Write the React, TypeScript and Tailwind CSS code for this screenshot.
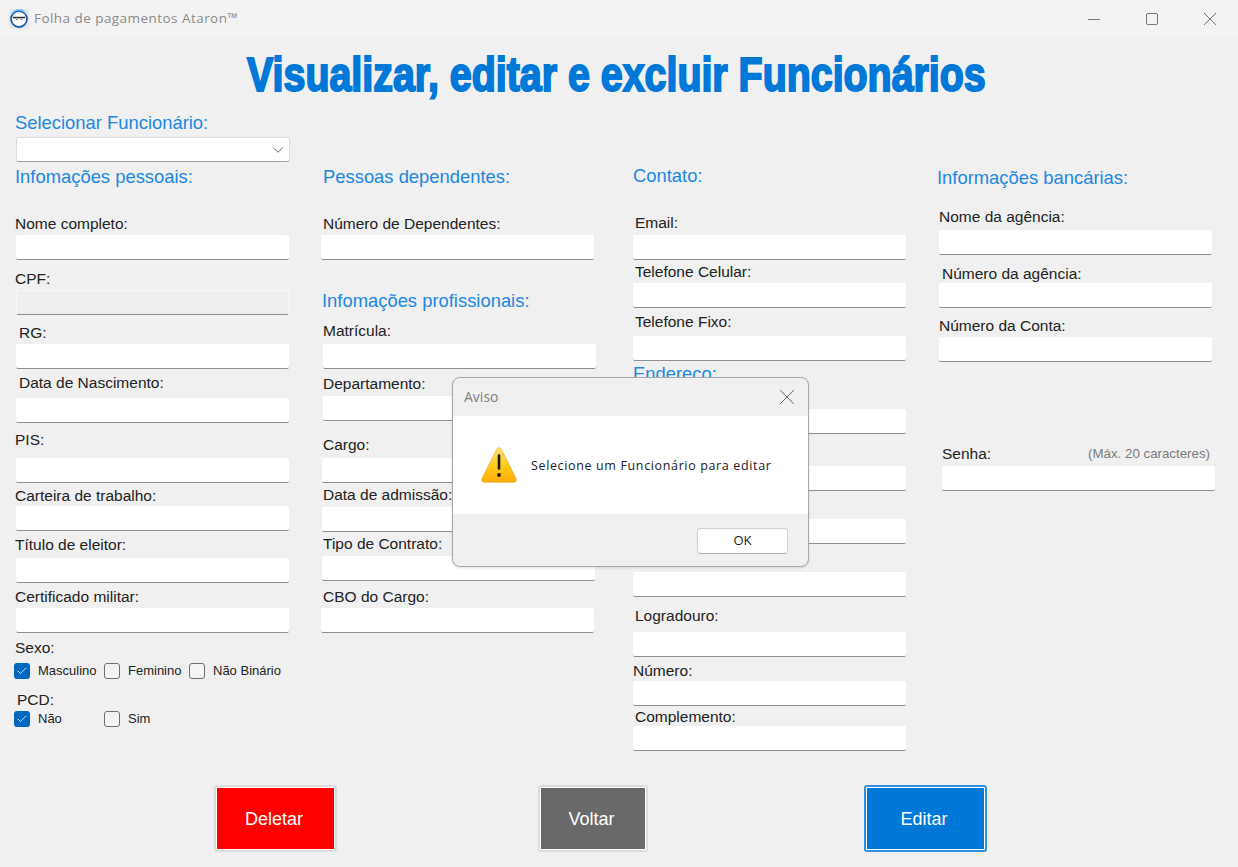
import { Check, ChevronDown, X } from 'lucide-react'

type Item = {
  kind?: 'section'
  label?: string
  top: string
  gap?: string
  labelX?: string
  inputX?: string
  note?: string
  disabled?: boolean
}

const col1: Item[] = [
  { label: 'Nome completo:', top: 'mt-[29px]', gap: 'mt-[3px]', inputX: 'ml-px' },
  { label: 'CPF:', top: 'mt-[11px]', gap: 'mt-[3px]', inputX: 'ml-px', disabled: true },
  { label: 'RG:', top: 'mt-[10px]', gap: 'mt-[3px]', labelX: 'ml-1', inputX: 'ml-px' },
  { label: 'Data de Nascimento:', top: 'mt-[6px]', gap: 'mt-[7px]', labelX: 'ml-1', inputX: 'ml-px' },
  { label: 'PIS:', top: 'mt-[9px]', gap: 'mt-[10px]', inputX: 'ml-px' },
  { label: 'Carteira de trabalho:', top: 'mt-[5px]', gap: 'mt-[2px]', inputX: 'ml-px' },
  { label: 'Título de eleitor:', top: 'mt-[6px]', gap: 'mt-[5px]', inputX: 'ml-px' },
  { label: 'Certificado militar:', top: 'mt-[6px]', gap: 'mt-[3px]', inputX: 'ml-px' },
]

const col2: Item[] = [
  { kind: 'section', label: 'Pessoas dependentes:', top: 'mt-[54px]', labelX: 'ml-[2px]' },
  { label: 'Número de Dependentes:', top: 'mt-[29px]', gap: 'mt-[3px]', labelX: 'ml-[2px]' },
  { kind: 'section', label: 'Infomações profissionais:', top: 'mt-[31px]', labelX: 'ml-px' },
  { label: 'Matrícula:', top: 'mt-[12px]', gap: 'mt-[5px]', labelX: 'ml-[2px]', inputX: 'ml-[2px]' },
  { label: 'Departamento:', top: 'mt-[7px]', gap: 'mt-[4px]', labelX: 'ml-[2px]', inputX: 'ml-[2px]' },
  { label: 'Cargo:', top: 'mt-[16px]', gap: 'mt-[5px]', labelX: 'ml-[2px]', inputX: 'ml-px' },
  { label: 'Data de admissão:', top: 'mt-[4px]', gap: 'mt-[4px]', labelX: 'ml-[2px]', inputX: 'ml-px' },
  { label: 'Tipo de Contrato:', top: 'mt-[4px]', gap: 'mt-[4px]', labelX: 'ml-[2px]', inputX: 'ml-px' },
  { label: 'CBO do Cargo:', top: 'mt-[8px]', gap: 'mt-[3px]', labelX: 'ml-[2px]' },
]

const col3: Item[] = [
  { kind: 'section', label: 'Contato:', top: 'mt-[53px]' },
  { label: 'Email:', top: 'mt-[29px]', gap: 'mt-[4px]', labelX: 'ml-[2px]' },
  { label: 'Telefone Celular:', top: 'mt-[4px]', gap: 'mt-[3px]', labelX: 'ml-[2px]' },
  { label: 'Telefone Fixo:', top: 'mt-[6px]', gap: 'mt-[6px]', labelX: 'ml-[2px]' },
  { kind: 'section', label: 'Endereço:', top: 'mt-[3px]' },
  // os rótulos destes quatro ficam atrás do aviso
  { top: '', gap: 'mt-[25px]' },
  { top: '', gap: 'mt-[32px]' },
  { top: '', gap: 'mt-[28px]' },
  { top: '', gap: 'mt-[28px]' },
  { label: 'Logradouro:', top: 'mt-[11px]', gap: 'mt-[8px]', labelX: 'ml-[2px]' },
  { label: 'Número:', top: 'mt-[6px]', gap: 'mt-[2px]' },
  { label: 'Complemento:', top: 'mt-[3px]', gap: 'mt-px', labelX: 'ml-[2px]' },
]

const col4: Item[] = [
  { kind: 'section', label: 'Informações bancárias:', top: 'mt-[55px]' },
  { label: 'Nome da agência:', top: 'mt-[21px]', gap: 'mt-[5px]', labelX: 'ml-[2px]', inputX: 'ml-[2px]' },
  { label: 'Número da agência:', top: 'mt-[11px]', gap: 'mt-px', labelX: 'ml-[5px]', inputX: 'ml-[2px]' },
  { label: 'Número da Conta:', top: 'mt-[10px]', gap: 'mt-[3px]', labelX: 'ml-[2px]', inputX: 'ml-[2px]' },
  { label: 'Senha:', top: 'mt-[84px]', gap: 'mt-[4px]', labelX: 'ml-[5px]', inputX: 'ml-[5px]', note: '(Máx. 20 caracteres)' },
]

function Section({ label, className = '' }: { label: string; className?: string }) {
  return <div className={`h-5 text-[18.4px] leading-5 whitespace-nowrap text-[#2188e0] ${className}`}>{label}</div>
}

function Label({ children, className = '' }: { children: string; className?: string }) {
  return <div className={`h-4 text-[15.5px] leading-4 whitespace-nowrap text-[#222] ${className}`}>{children}</div>
}

function Input({ disabled, className = '' }: { disabled?: boolean; className?: string }) {
  return (
    <input
      disabled={disabled}
      className={`block h-[25px] w-[273px] rounded-[2px] border-b border-b-[#8f8f8f] ${disabled ? 'border-x border-t border-x-[#f7f7f7] border-t-[#f7f7f7] bg-[#efefef]' : 'bg-white'} ${className}`}
    />
  )
}

function Column({ items, className }: { items: Item[]; className: string }) {
  return (
    <div className={`flex flex-col ${className}`}>
      {items.map((item, i) =>
        item.kind === 'section' ? (
          <Section key={i} label={item.label!} className={`${item.top} ${item.labelX ?? ''}`} />
        ) : (
          <div key={i}>
            {item.label && (
              <div className={`flex items-center justify-between ${item.top}`}>
                <Label className={item.labelX}>{item.label}</Label>
                {item.note && <span className="mr-[7px] text-[13.3px] leading-4 text-[#7a7a7a]">{item.note}</span>}
              </div>
            )}
            <Input disabled={item.disabled} className={`${item.gap ?? ''} ${item.inputX ?? ''}`} />
          </div>
        ),
      )}
    </div>
  )
}

function CheckItem({ label, checked, className }: { label: string; checked?: boolean; className: string }) {
  return (
    <div className={`flex h-4 items-center gap-2 ${className}`}>
      {checked ? (
        <span className="flex size-4 items-center justify-center rounded-[3px] bg-[#0067c0]">
          <Check size={12} strokeWidth={1.5} className="text-white" />
        </span>
      ) : (
        <span className="size-4 rounded-[3px] border border-[#6e6e6e] bg-[#f4f4f4]" />
      )}
      <span className="text-[13px] leading-[18px] whitespace-nowrap text-[#222]">{label}</span>
    </div>
  )
}

function AppIcon() {
  return (
    <svg width="20" height="20" viewBox="0 0 20 20" className="shrink-0">
      <rect width="20" height="20" fill="#e8e8e8" />
      <circle cx="10" cy="10" r="8" fill="#fff" stroke="#1f5fa8" strokeWidth="1.8" />
      <path d="M3 4.500A8 8 0 0 1 17 5" fill="none" stroke="#7cc4ee" strokeWidth="1.6" />
      <path d="M4 8.500h12" stroke="#222" strokeWidth="1.4" />
      <path d="M6.500 9.500l1.500 1.500 1-1.500M11 9.500l1.500 1.500 1-1.500" fill="none" stroke="#555" strokeWidth="0.8" />
    </svg>
  )
}

function WarningIcon() {
  return (
    <svg width="36" height="36" viewBox="0 0 36 36" className="shrink-0">
      <defs>
        <linearGradient id="warn" x1="0" y1="0" x2="0" y2="1">
          <stop offset="0" stopColor="#ffe27a" />
          <stop offset="0.5" stopColor="#ffcb1f" />
          <stop offset="1" stopColor="#fbae00" />
        </linearGradient>
      </defs>
      <path
        d="M18 .8c1 0 1.800.5 2.400 1.600l14.600 29c.9 1.900-.1 3.800-2 3.800H3c-1.900 0-2.900-1.900-2-3.800l14.600-29C16.200 1.300 17 .8 18 .8z"
        fill="url(#warn)"
        stroke="#e5a50a"
        strokeWidth="0.6"
      />
      <path d="M18 8.500v13" stroke="#1a1a1a" strokeWidth="2.600" strokeLinecap="round" />
      <circle cx="18" cy="28" r="1.900" fill="#1a1a1a" />
    </svg>
  )
}

function FormButton({ label, fill, frame, className }: { label: string; fill: string; frame: string; className: string }) {
  return (
    <button className={`h-[67px] rounded-[3px] border-2 bg-white p-px ${frame} ${className}`}>
      <span className={`flex size-full items-center justify-center pt-px pr-[3px] text-[18px] text-white ${fill}`}>{label}</span>
    </button>
  )
}

function WindowControls() {
  return (
    <div className="ml-auto flex items-center gap-[46px] pr-[22px]">
      <svg width="12" height="12" viewBox="0 0 12 12">
        <path d="M0 6.500h12" stroke="#777" strokeWidth="1" />
      </svg>
      <svg width="12" height="12" viewBox="0 0 12 12">
        <rect x="0.5" y="0.5" width="11" height="11" rx="1.500" fill="none" stroke="#777" strokeWidth="1" />
      </svg>
      <svg width="12" height="12" viewBox="0 0 12 12">
        <path d="M0 0l12 12M12 0L0 12" stroke="#777" strokeWidth="1" />
      </svg>
    </div>
  )
}

export default function App() {
  return (
    <div className="relative flex h-[867px] w-[1238px] flex-col overflow-hidden bg-[#f0f0f0] font-['Liberation_Sans',sans-serif]">
      <div className="flex h-[37px] shrink-0 items-center bg-[#f3f3f3] pl-[9px]">
        <AppIcon />
        <span className="ml-[5px] font-['Open_Sans',sans-serif] text-[13.5px] tracking-[0.45px] text-[#8a8a8a]">Folha de pagamentos Ataron™</span>
        <WindowControls />
      </div>

      <div className="flex h-[76px] shrink-0 items-center justify-center pr-[5px]">
        <h1 className="origin-center scale-x-[0.82] text-[48px] leading-none font-bold whitespace-nowrap text-[#0078d7] [-webkit-text-stroke:2px_#0078d7]">
          Visualizar, editar e excluir Funcionários
        </h1>
      </div>

      <div className="flex">
        <div className="ml-[15px] flex w-[276px] flex-col">
          <Section label="Selecionar Funcionário:" />
          <div className="mt-1 ml-px flex h-[25px] w-[274px] items-center justify-end rounded-[3px] border border-[#dcdcdc] border-b-[#a0a0a0] bg-white pr-[2px]">
            <ChevronDown size={18} strokeWidth={1.2} className="text-[#555]" />
          </div>
          <Section label="Infomações pessoais:" className="mt-[5px]" />
          <Column items={col1} className="" />
          <Label className="mt-[7px]">Sexo:</Label>
          <div className="mt-[7px] -ml-px flex">
            <CheckItem label="Masculino" checked className="w-[90px]" />
            <CheckItem label="Feminino" className="w-[85px]" />
            <CheckItem label="Não Binário" className="w-[95px]" />
          </div>
          <Label className="mt-[13px] ml-[2px]">PCD:</Label>
          <div className="mt-[3px] -ml-px flex">
            <CheckItem label="Não" checked className="w-[90px]" />
            <CheckItem label="Sim" className="w-[85px]" />
          </div>
        </div>
        <Column items={col2} className="ml-[30px] w-[276px]" />
        <Column items={col3} className="ml-[36px] w-[274px]" />
        <Column items={col4} className="ml-[30px] w-[280px]" />
      </div>

      <div className="mt-auto flex pb-[15px]">
        <FormButton label="Deletar" fill="bg-[#ff0000]" frame="border-[#dcdcdc]" className="ml-[214px] w-[123px]" />
        <FormButton label="Voltar" fill="bg-[#696969]" frame="border-[#dcdcdc]" className="ml-[201px] w-[110px]" />
        <FormButton label="Editar" fill="bg-[#0078d7]" frame="border-[#2f8fe0]" className="ml-[216px] w-[123px]" />
      </div>

      <div className="absolute top-[377px] left-[452px] flex h-[190px] w-[357px] flex-col overflow-hidden rounded-[8px] border border-[#a8a8a8] bg-[#f0f0f0] shadow-sm">
        <div className="flex h-[38px] shrink-0 items-center justify-between pr-2 pl-[11px] font-['Open_Sans',sans-serif] text-[14px] text-[#808080]">
          <span className="-mt-[2px]">Aviso</span>
          <X size={26} strokeWidth={0.8} className="text-[#555]" />
        </div>
        <div className="flex h-[98px] shrink-0 items-center bg-white pl-[28px]">
          <WarningIcon />
          <span className="ml-[14px] pt-[2px] font-['Open_Sans',sans-serif] text-[12.5px] tracking-[0.64px] text-[#1a1a2a]">Selecione um Funcionário para editar</span>
        </div>
        <div className="flex flex-1 items-start justify-end pt-[14px] pr-[20px]">
          <button className="flex h-[26px] w-[91px] items-center justify-center rounded-[4px] border border-[#d0d0d0] border-b-[#b0b0b0] bg-white font-['Open_Sans',sans-serif] text-[13px] font-medium text-[#1a1a1a]">OK</button>
        </div>
      </div>
    </div>
  )
}
